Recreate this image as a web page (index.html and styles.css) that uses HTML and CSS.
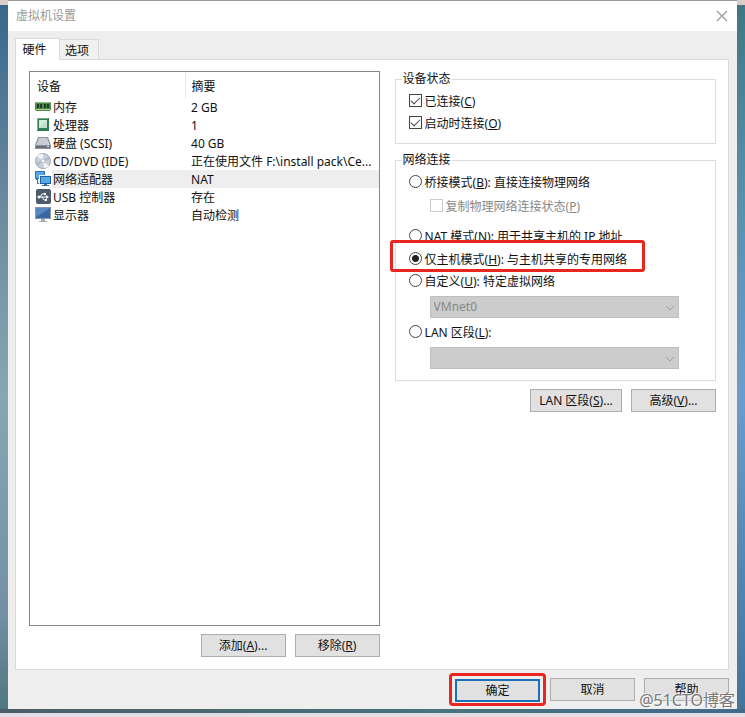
FILE: index.html
```html
<!DOCTYPE html>
<html lang="zh-CN">
  <head>
    <meta charset="UTF-8" />
    <meta name="viewport" content="width=device-width, initial-scale=1.0" />
    <title>虚拟机设置</title>
    <link rel="stylesheet" href="styles.css">
  </head>
  <body>
    <main class="dialog">
      <header class="titlebar">
        <h1>虚拟机设置</h1>
        <button class="close" type="button" aria-label="关闭">
          <svg width="12" height="12" viewBox="0 0 12 12"><path d="M1 1l10 10M11 1L1 11" stroke="#999" stroke-width="1.2" fill="none" /></svg>
        </button>
      </header>

      <nav class="tabs">
        <button class="tab active" type="button">硬件</button>
        <button class="tab" type="button">选项</button>
      </nav>

      <div class="panel">
        <section class="hardware">
          <div class="device-list">
            <table>
              <colgroup>
                <col class="col-icon" />
                <col class="col-device" />
                <col />
              </colgroup>
              <thead>
                <tr>
                  <th class="device" colspan="2">设备</th>
                  <th>摘要</th>
                </tr>
              </thead>
              <tbody>
                <tr>
                  <td class="icon">
                    <svg width="16" height="16" viewBox="0 0 16 16">
                      <path d="M0 3h16v8h-1v1H1v-1H0z" fill="#4c8a4a" />
                      <path d="M0 3h16v1H0z" fill="#8fbf8a" />
                      <path d="M2 5h2v4H2zM5 5h2v4H5zM9 5h2v4H9zM12 5h2v4h-2z" fill="#22382a" />
                      <path d="M1 10h14v1H1z" fill="#b6c98a" />
                    </svg>
                  </td>
                  <td>内存</td>
                  <td>2 GB</td>
                </tr>
                <tr>
                  <td class="icon">
                    <svg width="16" height="16" viewBox="0 0 16 16">
                      <path d="M2 1h12v13H2z" fill="#2f7d50" />
                      <path d="M2 1h11v1H3v11H2z" fill="#78b08c" />
                      <path d="M4 3h8v8H4z" fill="#d5ecdb" />
                      <path d="M4 11l8-8v8z" fill="#bfdfc9" />
                    </svg>
                  </td>
                  <td>处理器</td>
                  <td>1</td>
                </tr>
                <tr>
                  <td class="icon">
                    <svg width="16" height="16" viewBox="0 0 16 16">
                      <path d="M3 2h10l3 8v4H0v-4z" fill="#8c939d" />
                      <path d="M4 3h8l3 7H1z" fill="#c9cdd3" />
                      <path d="M1 11h14v2H1z" fill="#686f7b" />
                      <path d="M12 11h2v1h-2z" fill="#dfe6ee" />
                    </svg>
                  </td>
                  <td>硬盘 (SCSI)</td>
                  <td>40 GB</td>
                </tr>
                <tr>
                  <td class="icon">
                    <svg width="16" height="16" viewBox="0 0 16 16">
                      <circle cx="8" cy="8" r="7.5" fill="#c9d0d9" stroke="#a3a9b3" />
                      <path d="M8 8L2 3a8 8 0 0 1 6-2zM8 8l6 5a8 8 0 0 1-5 2z" fill="#f3f6f9" />
                      <path d="M8 8l6-5 1 4zM8 8l-7 1 2 4z" fill="#aebccb" />
                      <circle cx="8" cy="8" r="2" fill="#fff" stroke="#b0b6c0" />
                    </svg>
                  </td>
                  <td>CD/DVD (IDE)</td>
                  <td>正在使用文件 F:\install pack\Ce...</td>
                </tr>
                <tr class="selected">
                  <td class="icon">
                    <svg width="16" height="16" viewBox="0 0 16 16">
                      <path d="M0 0h10v8H0z" fill="#2f74b5" />
                      <path d="M1 1h8v6H1z" fill="#59a5df" />
                      <path d="M1 8h2v4h2v1H2V9H1z" fill="#3c6f9f" />
                      <path d="M4 4h12v9H4z" fill="#e8f2fa" />
                      <path d="M5 5h11v8H5z" fill="#1d5f9f" />
                      <path d="M6 6h9v6H6z" fill="#54aae8" />
                      <path d="M9 13h3v1h2v1H7v-1h2z" fill="#376c9b" />
                    </svg>
                  </td>
                  <td>网络适配器</td>
                  <td>NAT</td>
                </tr>
                <tr>
                  <td class="icon">
                    <svg width="16" height="16" viewBox="0 0 16 16">
                      <rect x="1" width="15" height="15" rx="2" fill="#4d5b6e" />
                      <path d="M3 8h9M5 8l2-3h2M7 8l2 3h2" stroke="#fff" fill="none" />
                      <path d="M11 6l3 2-3 2z" fill="#fff" />
                      <circle cx="4" cy="8" r="1.5" fill="#fff" />
                      <circle cx="10" cy="5" r="1.2" fill="#fff" />
                      <path d="M10 10h2v2h-2z" fill="#fff" />
                    </svg>
                  </td>
                  <td>USB 控制器</td>
                  <td>存在</td>
                </tr>
                <tr>
                  <td class="icon">
                    <svg width="16" height="16" viewBox="0 0 16 16">
                      <path d="M0 0h16v12H0z" fill="#8796a8" />
                      <path d="M1 1h14v10H1z" fill="#3768a3" />
                      <path d="M1 1h14L1 10z" fill="#5788bf" />
                      <path d="M6 12h4v2h2v1H4v-1h2z" fill="#a3adb8" />
                    </svg>
                  </td>
                  <td>显示器</td>
                  <td>自动检测</td>
                </tr>
              </tbody>
            </table>
          </div>
          <div class="buttons">
            <button class="btn" type="button">添加(<u>A</u>)...</button>
            <button class="btn" type="button">移除(<u>R</u>)</button>
          </div>
        </section>

        <section class="settings">
          <fieldset class="status">
            <legend>设备状态</legend>
            <label class="option"><input type="checkbox" checked /><span>已连接(<u>C</u>)</span></label>
            <label class="option"><input type="checkbox" checked /><span>启动时连接(<u>O</u>)</span></label>
          </fieldset>

          <fieldset class="network">
            <legend>网络连接</legend>
            <label class="option"><input type="radio" name="net" /><span>桥接模式(<u>B</u>): 直接连接物理网络</span></label>
            <label class="option sub disabled"><input type="checkbox" disabled /><span>复制物理网络连接状态(<u>P</u>)</span></label>
            <label class="option covered"><input type="radio" name="net" /><span>NAT 模式(<u>N</u>): 用于共享主机的 IP 地址</span></label>
            <label class="option marked"><input type="radio" name="net" checked /><span>仅主机模式(<u>H</u>): 与主机共享的专用网络</span></label>
            <label class="option"><input type="radio" name="net" /><span>自定义(<u>U</u>): 特定虚拟网络</span></label>
            <div class="select">
              <select disabled aria-label="特定虚拟网络">
                <option>VMnet0</option>
              </select>
              <svg width="10" height="6" viewBox="0 0 10 6"><path d="M1 1l4 4 4-4" stroke="#a0a0a0" fill="none" /></svg>
            </div>
            <label class="option"><input type="radio" name="net" /><span>LAN 区段(<u>L</u>):</span></label>
            <div class="select">
              <select disabled aria-label="LAN 区段"></select>
              <svg width="10" height="6" viewBox="0 0 10 6"><path d="M1 1l4 4 4-4" stroke="#a0a0a0" fill="none" /></svg>
            </div>
          </fieldset>

          <div class="buttons">
            <button class="btn wide" type="button">LAN 区段(<u>S</u>)...</button>
            <button class="btn" type="button">高级(<u>V</u>)...</button>
          </div>
        </section>
      </div>

      <footer class="buttons footer">
        <div class="ok">
          <button class="btn primary" type="button">确定</button>
        </div>
        <button class="btn" type="button">取消</button>
        <button class="btn" type="button">帮助</button>
      </footer>
    </main>
    <div class="watermark">@51CTO博客</div>
  </body>
</html>
```
FILE: styles.css
```css
* {
  box-sizing: border-box;
}
body {
  margin: 0;
  padding: 0 8px 8px;
  min-height: 100vh;
  display: flex;
  position: relative;
  font: 12px/18px "Noto Sans", "Noto Sans CJK SC", sans-serif;
  color: #111;
  background:
    linear-gradient(#dedbe2, #e4e0e6) bottom / 100% 4px no-repeat,
    linear-gradient(90deg, #4b5d6b, #47747d 60%, #43698b) bottom 4px left / 100% 4px no-repeat,
    linear-gradient(#d9cfc8, #d9cfc8) top / 100% 5px no-repeat,
    linear-gradient(#38668c, #6f8b9f 30%, #87a7b2 55%, #7590a6 85%, #4d757c) left / 8px 100% no-repeat,
    linear-gradient(#427582, #5b8ea5 25%, #6f9bcb 55%, #5785b0 80%, #477298) right / 8px 100% no-repeat;
}
button,
select {
  font: inherit;
  color: inherit;
}
.dialog {
  flex: 1;
  display: flex;
  flex-direction: column;
  background: #eee;
  border-top: 1px solid #999;
}

/* title bar */
.titlebar {
  display: flex;
  align-items: center;
  justify-content: space-between;
  height: 30px;
  padding: 0 9px 0 8px;
  background: #fff;
}
.titlebar h1 {
  margin: 0;
  font-size: 12px;
  font-weight: normal;
  color: #999;
}
.close {
  display: flex;
  padding: 0;
  border: 0;
  background: none;
}

/* tabs */
.tabs {
  display: flex;
  align-items: flex-end;
  padding: 7px 7px 0;
}
.tab {
  height: 20px;
  width: 39px;
  padding: 2px 4px 0 0;
  border: 1px solid #d9d9d9;
  border-width: 1px 1px 0 0;
  background: #f0f0f0;
}
.tab.active {
  height: 22px;
  width: 45px;
  padding: 0 6px 0 0;
  margin-bottom: -1px;
  border-left-width: 1px;
  background: #fff;
  position: relative;
}
.panel {
  flex: 1;
  display: grid;
  grid-template-columns: 12fr 11fr;
  gap: 15px;
  margin: 0 8px 0 7px;
  padding: 11px 12px 12px 13px;
  border: 1px solid #d9d9d9;
  background: #fff;
}

/* device list */
.hardware {
  display: flex;
  flex-direction: column;
}
.device-list {
  flex: 1;
  border: 1px solid #82878b;
}
table {
  width: 100%;
  border-collapse: collapse;
  table-layout: fixed;
}
.col-icon {
  width: 22px;
}
.col-device {
  width: 133px;
}
th {
  height: 26px;
  padding: 3px 6px 0;
  font-weight: normal;
  text-align: left;
}
.device {
  padding-left: 7px;
  border-right: 1px solid #e5e5e5;
}
td {
  height: 18px;
  padding: 1px 0 0 6px;
  line-height: 17px;
  white-space: nowrap;
}
td:nth-child(2) {
  padding-left: 1px;
}
td.icon {
  padding: 0 0 0 5px;
}
.icon svg {
  display: block;
}
.selected td:not(.icon) {
  background: #eee;
}

/* buttons */
.buttons {
  display: flex;
  justify-content: flex-end;
  gap: 9px;
  margin-top: 8px;
}
.btn {
  height: 23px;
  width: 85px;
  padding: 1px 0 0;
  border: 1px solid #adadad;
  background: #e1e1e1;
}
.btn.wide {
  width: 92px;
}
.btn.primary {
  display: block;
  border: 2px solid #1a6fb8;
}

/* settings */
fieldset {
  margin: 0;
  padding: 3px 0 9px 13px;
  border: 1px solid #dcdcdc;
}
.network {
  margin-top: 8px;
  padding-bottom: 8px;
}
legend {
  height: 16px;
  margin-left: -7px;
  padding: 0 1px;
  line-height: 16px;
}
.option {
  display: flex;
  gap: 3px;
  width: fit-content;
  height: 22px;
  line-height: 23px;
  white-space: nowrap;
  position: relative;
}
.option input {
  appearance: none;
  flex: none;
  width: 13px;
  height: 13px;
  margin: 4px 0 0;
  border: 1px solid #444;
  background: #fff;
}
.option input[type="radio"] {
  border-radius: 50%;
}
.option input[type="radio"]:checked {
  background: radial-gradient(#222 3px, #fff 4px);
}
.option input[type="checkbox"]:checked::before {
  content: "";
  display: block;
  width: 8px;
  height: 4px;
  margin: 2px 1px;
  border: solid #444;
  border-width: 0 0 1px 1px;
  transform: rotate(-45deg);
}
.option.sub {
  margin: 2px 0 8px 21px;
}
.option.disabled {
  color: #888;
}
.option.disabled input {
  border-color: #ccc;
}
.option.covered {
  height: 15px;
  margin-bottom: 8px;
  overflow: hidden;
}
.option.marked::after {
  content: "";
  position: absolute;
  inset: -8px -18px -2px -19px;
  border: 3px solid #e8251f;
  border-radius: 3px;
}
.select {
  position: relative;
  margin: 4px 36px 3px 21px;
}
.select select {
  display: block;
  appearance: none;
  width: 100%;
  height: 22px;
  padding: 0 3px;
  border: 1px solid #bfbfbf;
  border-radius: 0;
  background: #ccc;
  color: #888;
  opacity: 1;
}
.select svg {
  position: absolute;
  right: 4px;
  top: 9px;
}

/* footer */
.footer {
  margin: 3px 8px;
  align-items: center;
}
.ok {
  padding: 3px 3px 1px;
  border: 3px solid #e8251f;
  border-radius: 4px;
  margin-right: -5px;
}
.watermark {
  position: absolute;
  right: 10px;
  bottom: 7px;
  font-size: 16px;
  line-height: 20px;
  color: #777;
  text-shadow: 1px 1px 0 #fff, -1px -1px 0 #eee;
}
```
